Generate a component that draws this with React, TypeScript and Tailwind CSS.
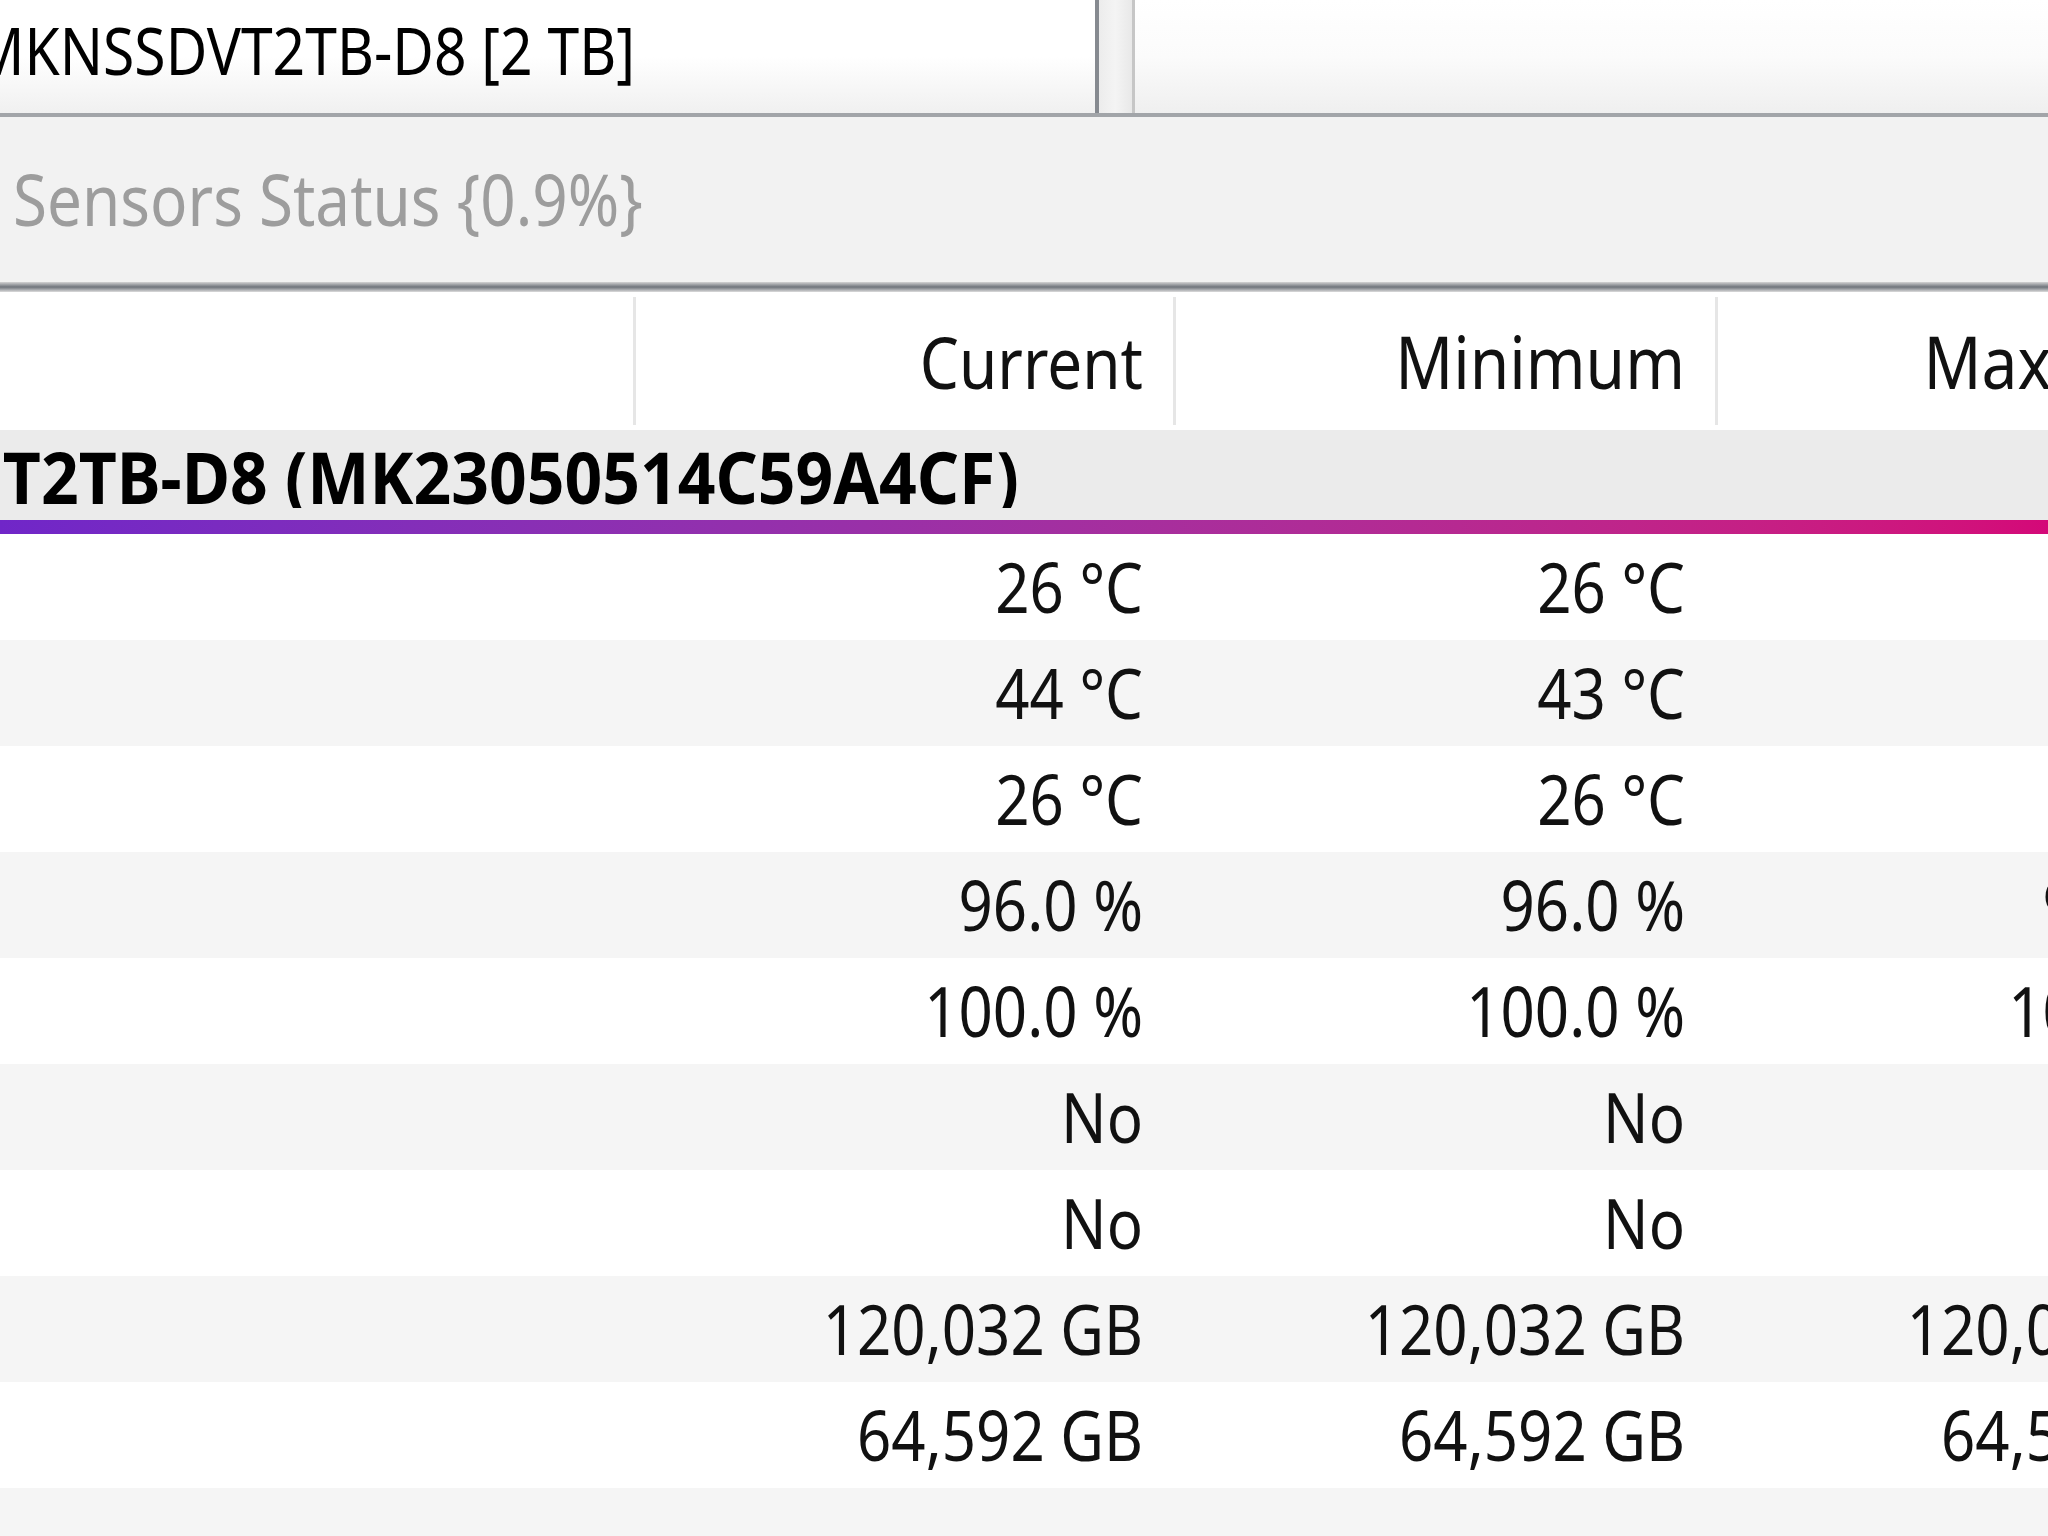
import React from "react";

interface Row {
  cur: string;
  min: string;
  max: string;
}

// Sensor values for the drive group, top to bottom.
const ROWS: Row[] = [
  { cur: "26 °C", min: "26 °C", max: "26 °C" },
  { cur: "44 °C", min: "43 °C", max: "44 °C" },
  { cur: "26 °C", min: "26 °C", max: "26 °C" },
  { cur: "96.0 %", min: "96.0 %", max: "96.0 %" },
  { cur: "100.0 %", min: "100.0 %", max: "100.0 %" },
  { cur: "No", min: "No", max: "No" },
  { cur: "No", min: "No", max: "No" },
  { cur: "120,032 GB", min: "120,032 GB", max: "120,032 GB" },
  { cur: "64,592 GB", min: "64,592 GB", max: "64,592 GB" },
  { cur: "", min: "", max: "" },
];

const font = { fontFamily: '"Noto Sans", "Open Sans", sans-serif' };

const txt = "inline-block origin-center scale-y-[1.15] whitespace-nowrap";
const gridCols = "grid grid-cols-[633px_540px_542px_542px]";

function Cell({
  children,
  sep,
  size = "text-[60px]",
}: {
  children?: React.ReactNode;
  sep?: boolean;
  size?: string;
}) {
  return (
    <div
      className={`flex items-center justify-end pr-[30px] ${size} ${
        sep ? "border-l-[3px] border-[#e6e6e6]" : ""
      }`}
    >
      <span className={txt}>{children}</span>
    </div>
  );
}

export default function App() {
  return (
    <div
      className="flex h-[1536px] w-[2048px] flex-col overflow-hidden bg-white text-[62px] leading-none text-[#111]"
      style={font}
    >
      {/* Sensor tree pane, cut off at the top */}
      <div className="flex h-[113px] shrink-0">
        <div className="flex w-[1095px] items-center bg-gradient-to-b from-white via-white to-[#f0f0f0]">
          <div className="flex w-[635px] justify-end overflow-hidden pb-[12px]">
            <span className={`${txt} text-[57px] text-black`}>MKNSSDVT2TB-D8 [2 TB]</span>
          </div>
        </div>
        <div className="w-[4px] bg-[#868a90]" />
        <div className="w-[33px] bg-gradient-to-r from-[#ececec] via-[#f4f4f4] to-[#e8e8e8]" />
        <div className="w-[3px] bg-[#c6c6c6]" />
        <div className="flex-1 bg-gradient-to-b from-white via-[#fbfbfb] to-[#efefef]" />
      </div>
      <div className="h-[4px] shrink-0 bg-[#a2a5a9]" />

      {/* Status strip */}
      <div className="flex h-[165px] shrink-0 items-center bg-[#f2f2f2] pl-[13px] pb-[4px]">
        <span className={`${txt} text-[#9d9d9d]`}>Sensors Status {"{0.9%}"}</span>
      </div>
      <div className="h-[10px] shrink-0 bg-gradient-to-b from-[#d4d4d4] via-[#70757c] to-[#dcdcdc]" />

      {/* Column header */}
      <div className={`${gridCols} h-[138px] shrink-0 bg-white py-[5px]`}>
        <div />
        <Cell sep size="text-[62px]">Current</Cell>
        <Cell sep size="text-[64px]">Minimum</Cell>
        <Cell sep size="text-[64px]">Maximum</Cell>
      </div>

      {/* Device group row */}
      <div className="flex h-[90px] shrink-0 items-center bg-[#ebebeb]">
        <div className="flex w-[1019px] justify-end overflow-hidden">
          <span className="inline-block origin-center scale-y-[1.1] whitespace-nowrap text-[66px] font-bold text-black">
            T2TB-D8 (MK23050514C59A4CF)
          </span>
        </div>
      </div>
      <div className="h-[14px] shrink-0 bg-gradient-to-r from-[#7026c8] to-[#d40878]" />

      {/* Sensor rows */}
      <div className="flex flex-col">
        {ROWS.map((r, i) => (
          <div
            key={i}
            className={`${gridCols} h-[106px] shrink-0 ${i % 2 ? "bg-[#f5f5f5]" : "bg-white"}`}
          >
            <div />
            <Cell>{r.cur}</Cell>
            <Cell>{r.min}</Cell>
            <Cell>{r.max}</Cell>
          </div>
        ))}
      </div>
    </div>
  );
}
